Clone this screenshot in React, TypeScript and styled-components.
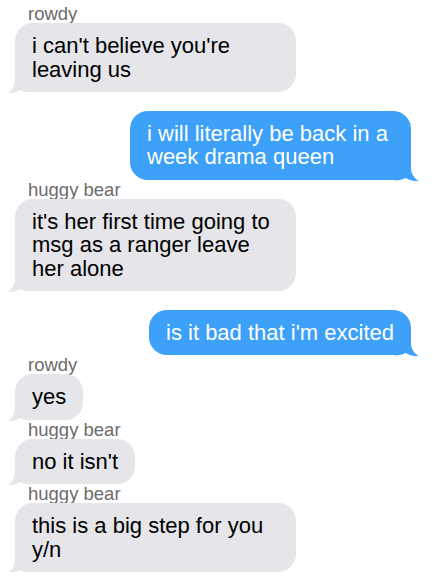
import React from "react";
import styled, { createGlobalStyle } from "styled-components";

const Global = createGlobalStyle`
  html, body { margin: 0; padding: 0; background: #ffffff; }
  body { font-family: "Liberation Sans", Arial, sans-serif; }
`;

const Thread = styled.div`
  display: flex;
  flex-direction: column;
  width: 433px;
  box-sizing: border-box;
  padding: 4px 22px 0 15px;
`;

const Sender = styled.div`
  font-size: 18.5px;
  line-height: 19px;
  color: #6b6b6b;
  padding-left: 13px;
`;

const Bubble = styled.div<{ $sent?: boolean }>`
  position: relative;
  align-self: ${(p) => (p.$sent ? "flex-end" : "flex-start")};
  max-width: 281px;
  box-sizing: border-box;
  padding: 11px 17px;
  border-radius: 18px;
  background: ${(p) => (p.$sent ? "#3da0f9" : "#e5e5ea")};
  color: ${(p) => (p.$sent ? "#ffffff" : "#000000")};
  font-size: 22px;
  line-height: 23.5px;
  margin-top: ${(p) => (p.$sent ? "18.5px" : "0")};
`;

const Text = styled.span`
  position: relative;
  z-index: 1;
`;

const TailSvg = styled.svg<{ $sent?: boolean }>`
  position: absolute;
  bottom: -1px;
  width: 24px;
  height: 20px;
  ${(p) => (p.$sent ? "right: -8px; transform: scaleX(-1);" : "left: -8px;")}
  fill: ${(p) => (p.$sent ? "#3da0f9" : "#e5e5ea")};
`;

const Tail = ({ sent }: { sent?: boolean }) => (
  <TailSvg $sent={sent} viewBox="0 0 24 20" aria-hidden="true">
    <path d="M8 0 L8 7 C8 13 5 17.5 0 20 C5.5 20.3 10.5 19 13.5 17 C16 18.6 19.5 19.4 24 19.6 L24 0 Z" />
  </TailSvg>
);

type Msg = { from?: string; text: string; sent?: boolean };

const messages: Msg[] = [
  { from: "rowdy", text: "i can't believe you're leaving us" },
  { sent: true, text: "i will literally be back in a week drama queen" },
  { from: "huggy bear", text: "it's her first time going to msg as a ranger leave her alone" },
  { sent: true, text: "is it bad that i'm excited" },
  { from: "rowdy", text: "yes" },
  { from: "huggy bear", text: "no it isn't" },
  { from: "huggy bear", text: "this is a big step for you y/n" },
];

export default function App() {
  return (
    <>
      <Global />
      <Thread>
        {messages.map((m, i) => (
          <React.Fragment key={i}>
            {m.from && <Sender>{m.from}</Sender>}
            <Bubble $sent={m.sent}>
              <Tail sent={m.sent} />
              <Text>{m.text}</Text>
            </Bubble>
          </React.Fragment>
        ))}
      </Thread>
    </>
  );
}
